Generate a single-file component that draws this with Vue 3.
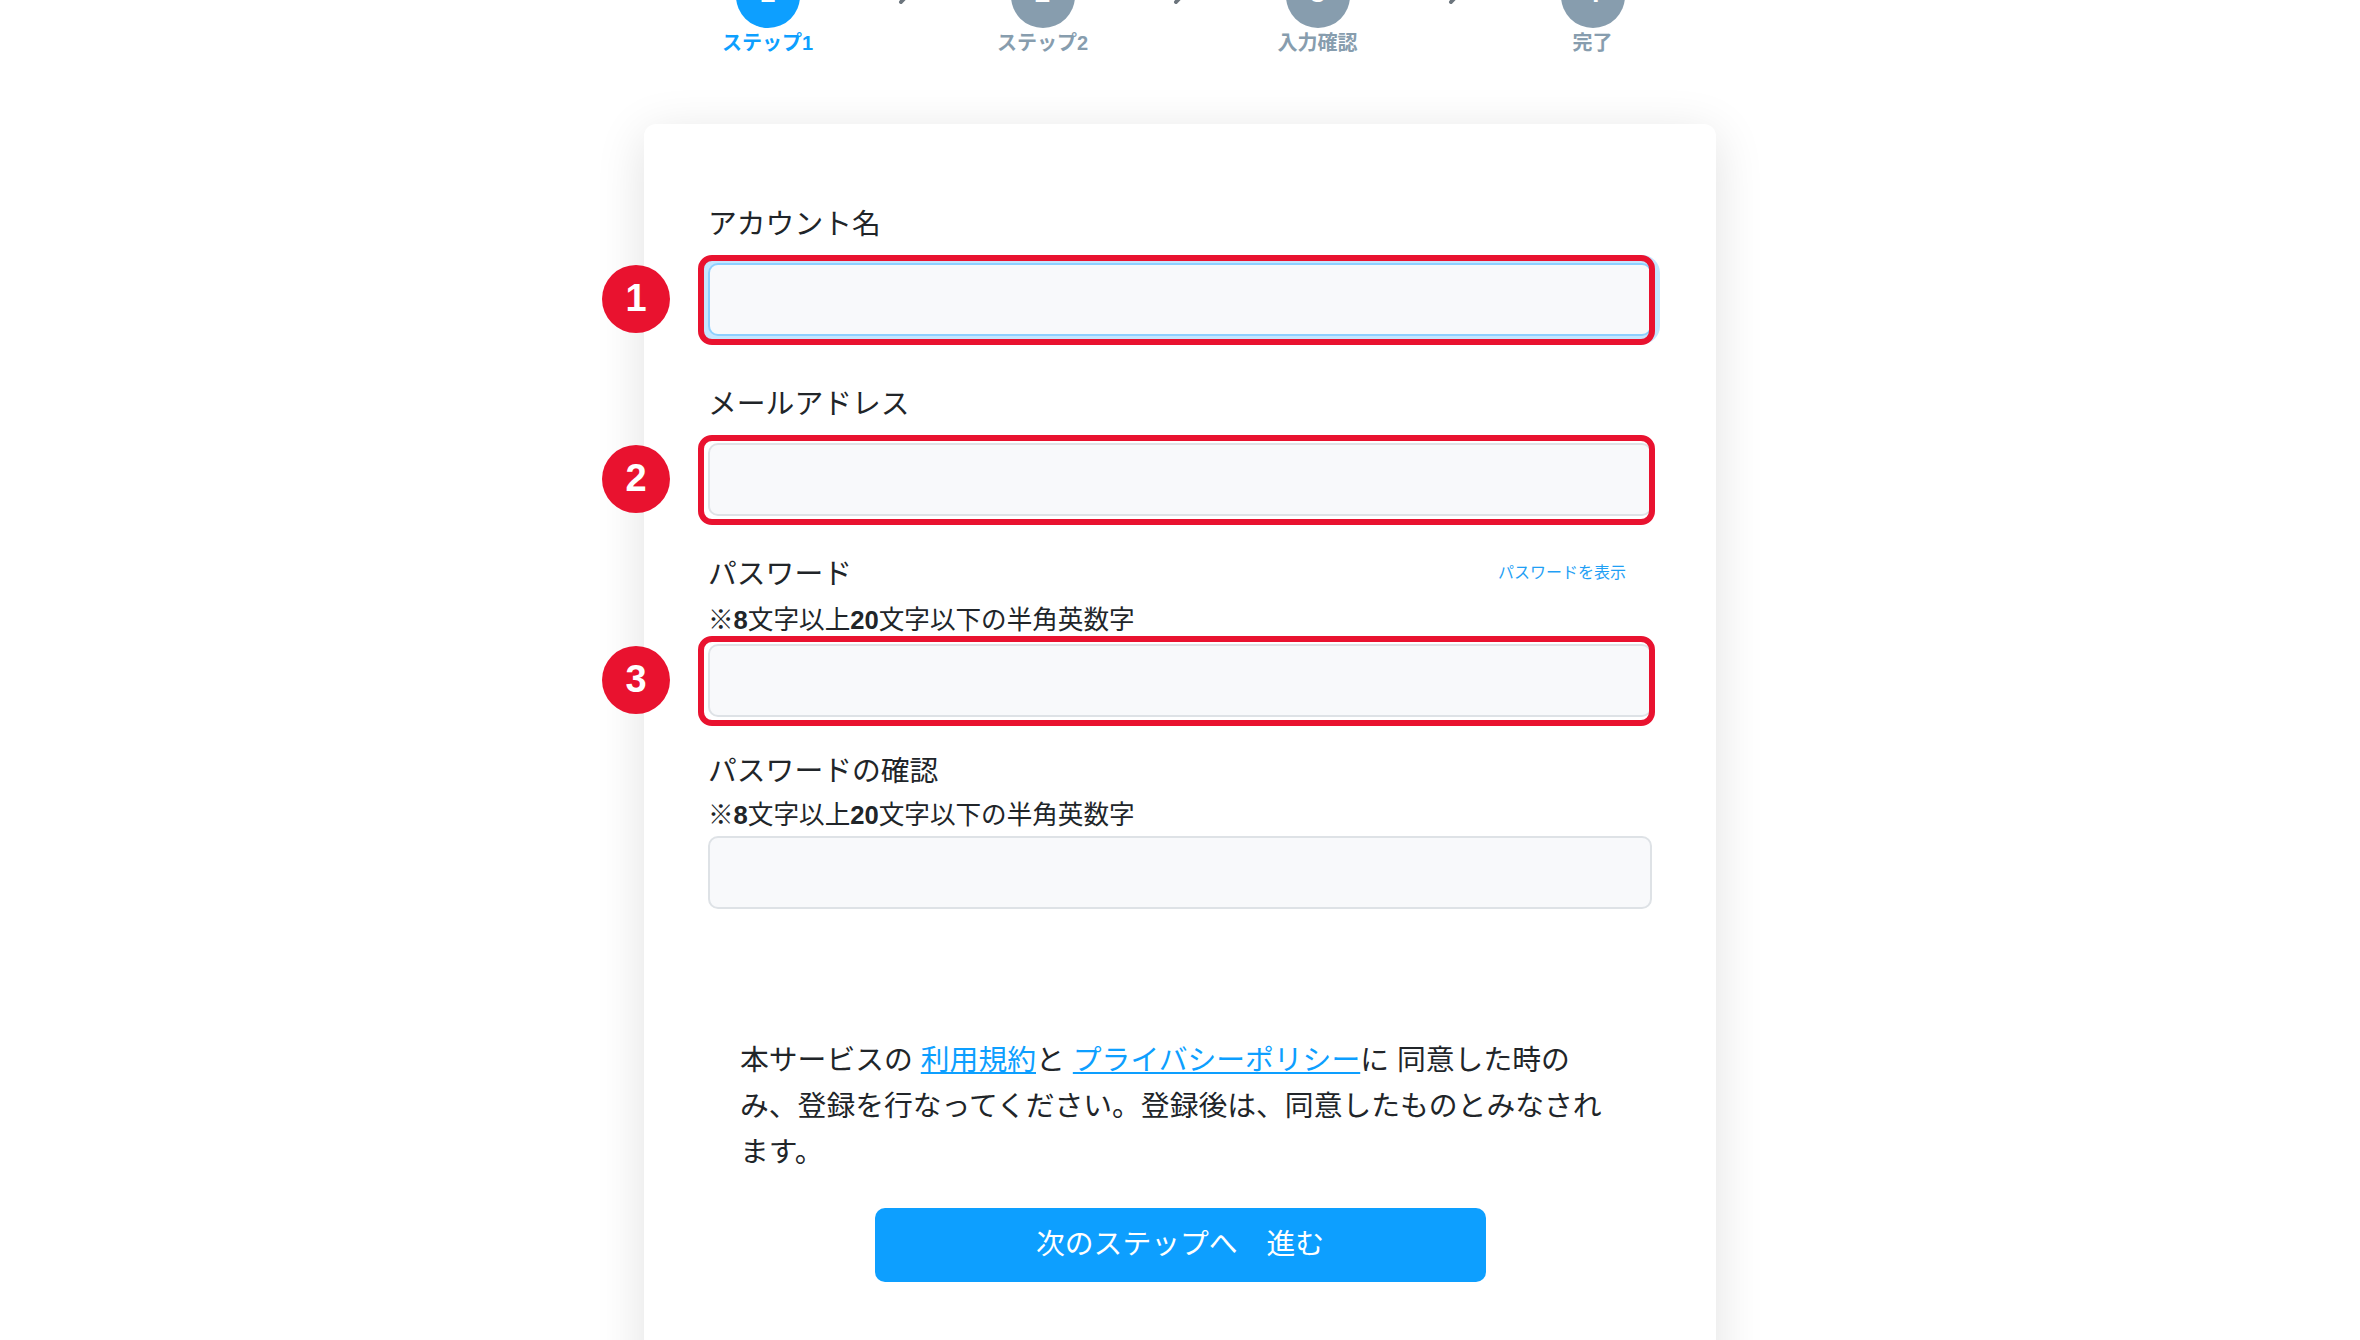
<template>
  <div class="page">
    <!-- step indicator, scrolled partly off the top -->
    <div class="stepper">
      <template v-for="(step, idx) in steps" :key="step.label">
        <div class="step" :class="{ active: idx === 0 }">
          <div class="step-circle">{{ idx + 1 }}</div>
          <div class="step-label">{{ step.label }}</div>
        </div>
        <svg v-if="idx < steps.length - 1" class="step-arrow" viewBox="0 0 20 36" width="20" height="36">
          <path d="M6 34 L20 19" fill="none" stroke="#6c757d" stroke-width="4" stroke-linecap="round" />
        </svg>
      </template>
    </div>

    <main class="card">
      <div v-for="field in fields" :key="field.label" class="field" :class="field.cls">
        <div class="label-row">
          <label class="field-label">{{ field.label }}</label>
          <a v-if="field.toggle" class="show-password">パスワードを表示</a>
        </div>
        <p v-if="field.hint" class="field-hint">※<b>8</b>文字以上<b>20</b>文字以下の半角英数字</p>
        <div class="input-wrap">
          <input class="text-input" :class="{ focused: field.focused }" type="text" />
          <template v-if="field.badge">
            <span class="red-frame"></span>
            <span class="badge">{{ field.badge }}</span>
          </template>
        </div>
      </div>

      <p class="terms">
        本サービスの <a href="#">利用規約</a>と <a href="#">プライバシーポリシー</a>に 同意した時のみ、登録を行なってください。登録後は、同意したものとみなされます。
      </p>

      <button class="next-button" type="button">次のステップへ　進む</button>
    </main>
  </div>
</template>

<script setup>
const steps = [
  { label: 'ステップ1' },
  { label: 'ステップ2' },
  { label: '入力確認' },
  { label: '完了' },
]

const fields = [
  { label: 'アカウント名', cls: 'field-account', badge: 1, focused: true },
  { label: 'メールアドレス', cls: 'field-mail', badge: 2 },
  { label: 'パスワード', cls: 'field-password', badge: 3, hint: true, toggle: true },
  { label: 'パスワードの確認', cls: 'field-confirm', hint: true },
]
</script>

<style>
html,
body {
  margin: 0;
  background: #fff;
}
</style>

<style scoped>
.page {
  height: 1340px;
  overflow: hidden;
  font-family: "Liberation Sans", "Noto Sans CJK JP", sans-serif;
  color: #212529;
}

/* ─── STEPPER ─────────────────────────────── */
.stepper {
  display: flex;
  justify-content: center;
  align-items: flex-start;
  margin-top: -36px;
  height: 160px;
}
.step {
  width: 183px;
  display: flex;
  flex-direction: column;
  align-items: center;
  color: #879dae;
}
.step.active {
  color: #0d9fff;
}
.step-circle {
  width: 64px;
  height: 64px;
  border-radius: 50%;
  background: #879dae;
  color: #fff;
  font-size: 28px;
  font-weight: 700;
  line-height: 58px;
  text-align: center;
}
.step.active .step-circle {
  background: #0d9fff;
}
.step-label {
  font-size: 20px;
  font-weight: 700;
  line-height: 30px;
}
.step-arrow {
  margin: 4px 36px 0;
}

/* ─── CARD ────────────────────────────────── */
.card {
  width: 1072px;
  box-sizing: border-box;
  margin: 0 auto;
  height: 1400px;
  padding: 79px 64px 0;
  background: #fff;
  border-radius: 12px;
  box-shadow: 0 10px 50px rgba(0, 0, 0, 0.12);
}
.field-mail {
  margin-top: 47px;
}
.field-password {
  margin-top: 37px;
}
.field-confirm {
  margin-top: 33px;
}
.label-row {
  display: flex;
  justify-content: space-between;
  align-items: center;
  margin-bottom: 17px;
}
.field-password .label-row {
  margin-bottom: 5px;
}
.field-confirm .label-row {
  margin-bottom: 3px;
}
.field-label {
  font-size: 28.8px;
  line-height: 43px;
}
.show-password {
  padding-right: 26px;
  margin-bottom: 8px;
  font-size: 16px;
  color: #1f9ff5;
}
.field-hint {
  margin: 0 0 5px;
  font-size: 25.6px;
  line-height: 38px;
}
.field-confirm .field-hint {
  margin-bottom: 2px;
}
.input-wrap {
  position: relative;
}
.text-input {
  display: block;
  width: 100%;
  height: 73px;
  box-sizing: border-box;
  border: 2px solid #dee2e6;
  border-radius: 10px;
  background: #f8f9fb;
  outline: none;
}
.text-input.focused {
  border-color: #8ed0ff;
  box-shadow: 0 0 0 8px #c5e6ff;
}
.red-frame {
  position: absolute;
  top: -8px;
  bottom: -9px;
  left: -10px;
  right: -3px;
  border: 6px solid #e9122f;
  border-radius: 14px;
  pointer-events: none;
}
.badge {
  position: absolute;
  top: 2px;
  left: -106px;
  width: 68px;
  height: 68px;
  border-radius: 50%;
  background: #e9122f;
  color: #fff;
  font-size: 38px;
  font-weight: 700;
  line-height: 66px;
  text-align: center;
}

/* ─── TERMS + BUTTON ──────────────────────── */
.terms {
  margin: 128px 32px 33px;
  font-size: 28.8px;
  line-height: 46px;
}
.terms a {
  color: #0d9fff;
  text-decoration: underline;
}
.next-button {
  display: block;
  width: 611px;
  height: 74px;
  margin: 0 auto;
  padding: 0 0 7px;
  border: none;
  border-radius: 10px;
  background: #0d9fff;
  color: #fff;
  font-family: inherit;
  font-size: 28.8px;
}
</style>
